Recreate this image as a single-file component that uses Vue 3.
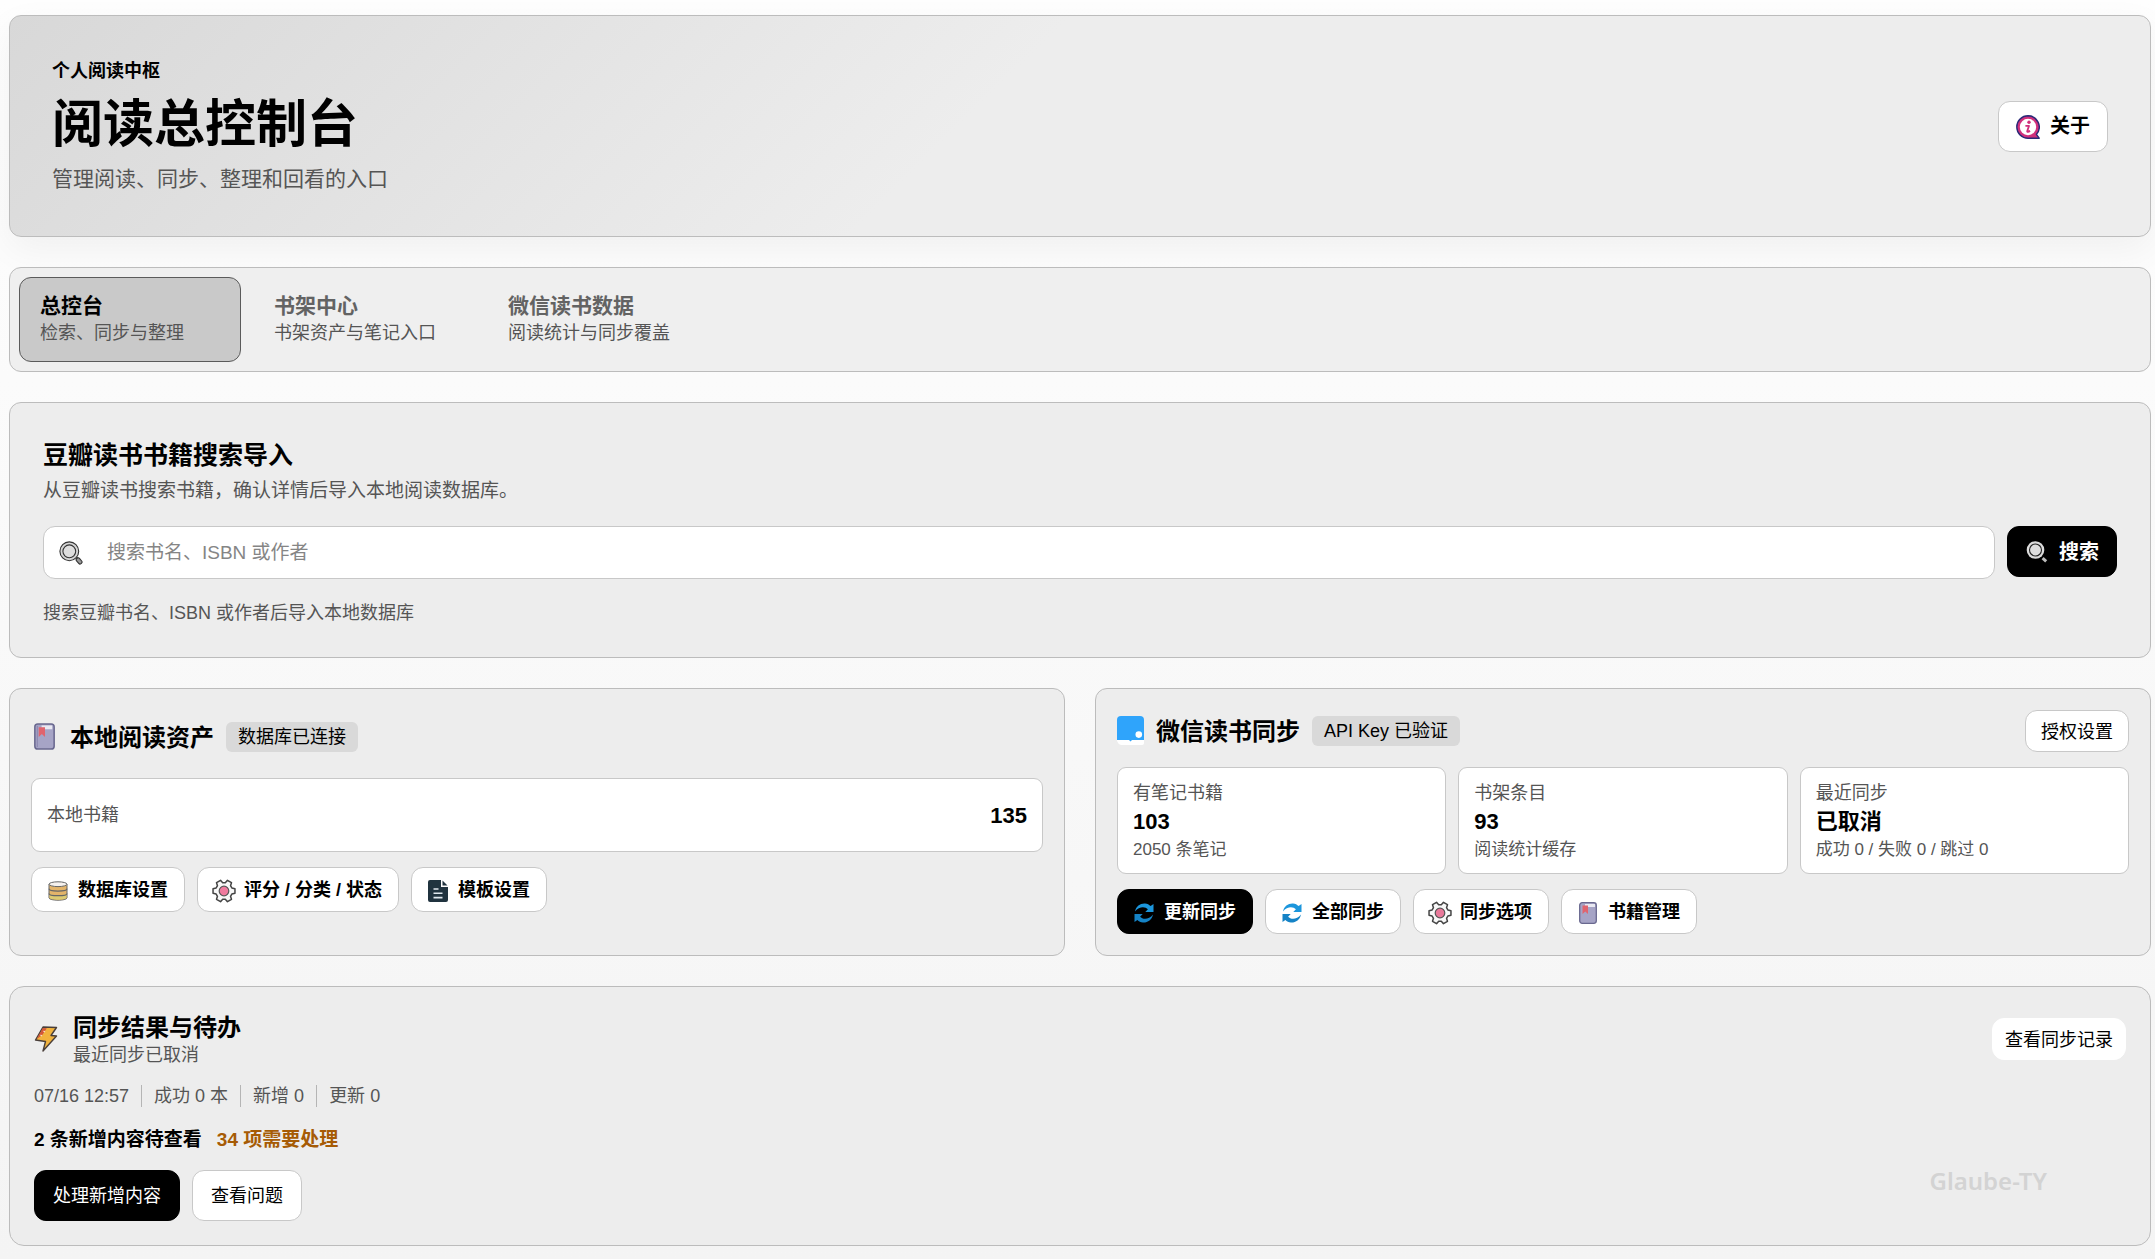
<template>
  <div class="dashboard">
    <!-- Hero -->
    <header class="panel hero">
      <div>
        <p class="hero-eyebrow">个人阅读中枢</p>
        <h1 class="hero-title">阅读总控制台</h1>
        <p class="hero-desc">管理阅读、同步、整理和回看的入口</p>
      </div>
      <button type="button" class="btn btn-large">
        <svg class="icon-24" viewBox="0 0 24 24" aria-hidden="true">
          <path d="M12 0.8a11.2 11.2 0 1 0 0 22.4h11.2l-2.8-3.8A11.2 11.2 0 0 0 12 0.8z" fill="#d0307c" stroke="#2b2a78" stroke-width="1.4" stroke-linejoin="round" />
          <circle cx="12" cy="12" r="8.2" fill="#fff" />
          <circle cx="13" cy="7.2" r="1.7" fill="#d0307c" />
          <path d="M9.4 10.9h3.6l-1.8 5.4q0 1.200 2.900-0.400" fill="none" stroke="#d0307c" stroke-width="1.800" stroke-linejoin="round" />
        </svg>
        关于
      </button>
    </header>

    <!-- Tabs -->
    <nav class="panel tabs">
      <button
        v-for="tab in tabs"
        :key="tab.id"
        type="button"
        :class="['tab', { active: activeTab === tab.id }]"
        @click="activeTab = tab.id"
      >
        <strong class="tab-title">{{ tab.title }}</strong>
        <span class="tab-desc">{{ tab.desc }}</span>
      </button>
    </nav>

    <!-- Book search -->
    <section class="panel search-panel">
      <h2 class="search-title">豆瓣读书书籍搜索导入</h2>
      <p class="search-desc">从豆瓣读书搜索书籍，确认详情后导入本地阅读数据库。</p>
      <form class="search-row" @submit.prevent>
        <label class="search-box">
          <svg class="icon-24" viewBox="0 0 24 24" aria-hidden="true">
            <path d="M17.5 16.5l1.6 1.5" stroke="#333" stroke-width="2" />
            <circle cx="10.3" cy="10.3" r="9.4" fill="#d6d6d6" stroke="#333" stroke-width="1.1" />
            <circle cx="10.3" cy="10.3" r="6.4" fill="#dedede" stroke="#333" stroke-width="1.1" />
            <rect x="16.8" y="18" width="6.6" height="3.8" rx="1.6" transform="rotate(50 20.1 19.9)" fill="#999" stroke="#333" stroke-width="1.1" />
          </svg>
          <input v-model="keyword" type="text" class="search-input" aria-label="搜索书名、ISBN 或作者" placeholder="搜索书名、ISBN 或作者" />
        </label>
        <button type="submit" class="btn btn-large btn-dark">
          <svg class="icon-24" viewBox="0 0 24 24" aria-hidden="true">
            <circle cx="10.5" cy="10" r="8.8" fill="#dcdcdc" />
            <circle cx="10.5" cy="10" r="6" fill="#dedede" stroke="#222" stroke-width="1.1" />
            <path d="M17.6 18.2l3.6 3.2" stroke="#bdbdbd" stroke-width="3" />
          </svg>
          搜索
        </button>
      </form>
      <p class="search-hint">搜索豆瓣书名、ISBN 或作者后导入本地数据库</p>
    </section>

    <div class="columns">
      <!-- Local library -->
      <section class="panel card">
        <div class="card-head card-head-tall">
          <svg class="icon-book" viewBox="0 0 22 28" aria-hidden="true">
            <rect x="1" y="1" width="20" height="26" rx="3" fill="#a6a4c6" stroke="#69688f" stroke-width="1.6" />
            <path d="M8 2.500h11v4H8z" fill="#e9e9f2" />
            <path d="M3.500 3v22" stroke="#8583ab" stroke-width="1" />
            <path d="M5 4.500h6.500v10l-3.250-3-3.250 3z" fill="#e0646e" />
          </svg>
          <h2 class="card-title">本地阅读资产</h2>
          <span class="badge">数据库已连接</span>
        </div>
        <div class="count-box">
          <span>本地书籍</span>
          <strong>135</strong>
        </div>
        <div class="actions">
          <button type="button" class="btn">
            <svg class="icon-20" viewBox="0 0 20 20" aria-hidden="true">
              <path d="M1 3.2v13.6c0 3.2 18 3.2 18 0V3.2z" fill="#e3b46a" stroke="#666" />
              <path d="M1.5 12.5c2 2.4 15 2.4 17 0v4.3c-1 2.6-16 2.6-17 0z" fill="#dccb72" />
              <ellipse cx="10" cy="3.2" rx="9" ry="2.4" fill="#f5f1ee" stroke="#666" />
              <path d="M1 7.8c0 3 18 3 18 0M1 12.4c0 3 18 3 18 0" fill="none" stroke="#666" stroke-width="1.2" />
            </svg>
            数据库设置
          </button>
          <button type="button" class="btn">
            <svg class="icon-gear" viewBox="0 0 24 24" aria-hidden="true">
              <path :d="gearPath" fill="#f8f8f8" stroke="#444" stroke-width="1.5" stroke-linejoin="round" />
              <circle cx="12" cy="12" r="4.8" fill="#f07a9e" stroke="#555" stroke-width="1.2" />
            </svg>
            评分 / 分类 / 状态
          </button>
          <button type="button" class="btn">
            <svg class="icon-20" viewBox="0 0 20 22" aria-hidden="true">
              <path d="M2 0h11v7h7v13a2 2 0 0 1-2 2H2a2 2 0 0 1-2-2V2a2 2 0 0 1 2-2z" fill="#20333f" />
              <path d="M14.5 0.5L19.5 5.5h-5z" fill="#20333f" />
              <path d="M5.5 9h5M5.5 13.3h9M5.5 17.6h9" stroke="#dfe8ee" stroke-width="1.6" />
            </svg>
            模板设置
          </button>
        </div>
      </section>

      <!-- WeRead sync -->
      <section class="panel card">
        <div class="card-head">
          <svg class="icon-weread" viewBox="0 0 27 30" aria-hidden="true">
            <path d="M0 23h27v4a2 2 0 0 1-2 2H4q-3-1-4-4z" fill="#fff" />
            <path d="M4 0h19a4 4 0 0 1 4 4v20H0V4a4 4 0 0 1 4-4z" fill="#2fa4fb" />
            <path d="M12 24h3l-1.5 1.5z" fill="#2fa4fb" />
            <circle cx="21.8" cy="18.6" r="3.3" fill="#fff" />
          </svg>
          <h2 class="card-title">微信读书同步</h2>
          <span class="badge">API Key 已验证</span>
          <button type="button" class="btn btn-plain head-action">授权设置</button>
        </div>
        <div class="stats">
          <div v-for="stat in stats" :key="stat.label" class="stat">
            <span class="stat-label">{{ stat.label }}</span>
            <strong class="stat-value">{{ stat.value }}</strong>
            <span class="stat-note">{{ stat.note }}</span>
          </div>
        </div>
        <div class="actions">
          <button
            v-for="action in syncActions"
            :key="action.label"
            type="button"
            :class="['btn', { 'btn-dark': action.primary }]"
          >
            <svg v-if="action.icon === 'sync'" class="icon-20" viewBox="0 0 20 20" aria-hidden="true">
              <path d="M1 8.5C2 3 6.5 0.2 11 0.5c2.4 0.2 4.2 1.2 5.6 2.6L19.5 1v8h-8.2l2.6-2.7C11 3.2 5 3.5 1 8.5z" fill="#1c96dc" />
              <path d="M19 11.5C18 17 13.5 19.8 9 19.5c-2.4-0.2-4.2-1.2-5.6-2.6L0.5 19v-8h8.2l-2.6 2.7C9 16.8 15 16.5 19 11.5z" fill="#1583c6" />
            </svg>
            <svg v-else-if="action.icon === 'gear'" class="icon-gear" viewBox="0 0 24 24" aria-hidden="true">
              <path :d="gearPath" fill="#f8f8f8" stroke="#444" stroke-width="1.5" stroke-linejoin="round" />
              <circle cx="12" cy="12" r="4.8" fill="#e8799a" stroke="#555" stroke-width="1.2" />
            </svg>
            <svg v-else class="icon-20" viewBox="0 0 20 22" aria-hidden="true">
              <rect x="1.7" y="0.7" width="16.6" height="20.6" rx="2.5" fill="#a6a4c6" stroke="#69688f" stroke-width="1.3" />
              <path d="M7 2h10v3H7z" fill="#e9e9f2" />
              <path d="M4.5 3.5h5.5v8.5l-2.75-2.5-2.75 2.5z" fill="#e0646e" />
            </svg>
            {{ action.label }}
          </button>
        </div>
      </section>
    </div>

    <!-- Sync result -->
    <section class="panel result">
      <div class="result-head">
        <svg class="icon-bolt" viewBox="0 0 24 26" aria-hidden="true">
          <path d="M9 1L22.5 1.5 17 9.5l5.5 0.5-13.5 15 2.5-9.5-10-1.5z" fill="#f2b33d" stroke="#4a3f3a" stroke-width="1.4" stroke-linejoin="round" />
          <path d="M8.8 2l4 0.2-4.5 6.8-5.5 4z" fill="#d4573a" />
          <path d="M9.5 5l1.5 1M6.5 9l1.5 1" stroke="#f9dfc8" stroke-width="1.3" />
        </svg>
        <div>
          <h2 class="card-title">同步结果与待办</h2>
          <p class="result-desc">最近同步已取消</p>
        </div>
        <button type="button" class="btn btn-plain btn-borderless head-action">查看同步记录</button>
      </div>
      <div class="meta">
        <span v-for="item in meta" :key="item" class="meta-item">{{ item }}</span>
      </div>
      <div class="todo">
        <strong>2 条新增内容待查看</strong>
        <strong class="todo-warn">34 项需要处理</strong>
      </div>
      <div class="actions">
        <button type="button" class="btn btn-result btn-dark">处理新增内容</button>
        <button type="button" class="btn btn-result">查看问题</button>
      </div>
      <span class="watermark">Glaube-TY</span>
    </section>
  </div>
</template>

<script setup>
import { ref } from 'vue'

const activeTab = ref('console')
const keyword = ref('')

const tabs = [
  { id: 'console', title: '总控台', desc: '检索、同步与整理' },
  { id: 'shelf', title: '书架中心', desc: '书架资产与笔记入口' },
  { id: 'weread', title: '微信读书数据', desc: '阅读统计与同步覆盖' }
]

const stats = [
  { label: '有笔记书籍', value: '103', note: '2050 条笔记' },
  { label: '书架条目', value: '93', note: '阅读统计缓存' },
  { label: '最近同步', value: '已取消', note: '成功 0 / 失败 0 / 跳过 0' }
]

const syncActions = [
  { label: '更新同步', icon: 'sync', primary: true },
  { label: '全部同步', icon: 'sync' },
  { label: '同步选项', icon: 'gear' },
  { label: '书籍管理', icon: 'book' }
]

const meta = ['07/16 12:57', '成功 0 本', '新增 0', '更新 0']

// Gear outline with six teeth around (12, 12)
const gearPath = (() => {
  const points = []
  for (let i = 0; i < 6; i++) {
    const steps = [[-21, 8.4], [-12, 11.2], [12, 11.2], [21, 8.4]]
    for (const [offset, radius] of steps) {
      const angle = ((i * 60 + offset) * Math.PI) / 180
      points.push(`${(12 + radius * Math.cos(angle)).toFixed(2)} ${(12 + radius * Math.sin(angle)).toFixed(2)}`)
    }
  }
  return `M${points.join('L')}Z`
})()
</script>

<style>
body {
  margin: 0;
  background: #f5f5f5;
}
</style>

<style scoped>
.dashboard {
  box-sizing: border-box;
  min-height: 100vh;
  padding: 15px 4px 13px 9px;
  display: flex;
  flex-direction: column;
  gap: 30px;
  background: linear-gradient(180deg, #fefefe, #f4f4f4);
  color: #000;
  font-family: "Liberation Sans", "Noto Sans CJK SC", sans-serif;
  font-size: 18px;
  line-height: 27px;
}

h1,
h2,
p {
  margin: 0;
}

svg {
  flex: none;
}

.panel {
  box-sizing: border-box;
  background: #ededed;
  border: 1px solid #bcbcbc;
  border-radius: 12px;
}

.hero {
  padding: 42px;
  display: flex;
  align-items: center;
  justify-content: space-between;
  background: linear-gradient(135deg, #d8d8d8, #ededed 45%);
  box-shadow: 0 12px 36px rgba(0, 0, 0, 0.05);
}

.hero-eyebrow {
  font-weight: 700;
}

.hero-title {
  margin: 12px 0 10px;
  font-size: 51px;
  line-height: 56px;
}

.hero-desc {
  font-size: 21px;
  line-height: 31px;
  color: #555;
}

.tabs {
  padding: 9px;
  display: flex;
  gap: 12px;
  background: #efefef;
}

.tab {
  box-sizing: border-box;
  width: 222px;
  padding: 14px 20px;
  display: flex;
  flex-direction: column;
  border: 1px solid transparent;
  border-radius: 12px;
  background: transparent;
  font: inherit;
  text-align: left;
  color: #636363;
  cursor: pointer;
}

.tab.active {
  background: #c9c9c9;
  border-color: #5a5a5a;
}

.tab-title {
  font-size: 21px;
  line-height: 28px;
}

.tab.active .tab-title {
  color: #000;
}

.tab-desc {
  color: #555;
}

.search-panel {
  padding: 33px 33px 30px;
}

.search-title {
  font-size: 25px;
  line-height: 38px;
}

.search-desc {
  margin-top: 2px;
  font-size: 19px;
  line-height: 30px;
  color: #555;
}

.search-row {
  margin: 20px 0 21px;
  display: flex;
  align-items: flex-start;
  gap: 12px;
}

.search-box {
  box-sizing: border-box;
  flex: 1;
  height: 53px;
  padding: 0 15px;
  display: flex;
  align-items: center;
  gap: 24px;
  background: #fff;
  border: 1px solid #c8c8c8;
  border-radius: 12px;
}

.search-input {
  flex: 1;
  min-width: 0;
  padding: 0;
  border: none;
  outline: none;
  background: transparent;
  font: inherit;
  font-size: 19px;
}

.search-input::placeholder {
  color: #858585;
}

.search-hint {
  color: #555;
}

.btn {
  box-sizing: border-box;
  height: 45px;
  padding: 2px 16px 0;
  display: inline-flex;
  align-items: center;
  justify-content: center;
  gap: 10px;
  background: #fff;
  border: 1px solid #c8c8c8;
  border-radius: 12px;
  color: #000;
  font: inherit;
  font-weight: 700;
  white-space: nowrap;
  cursor: pointer;
}

.btn-large {
  height: 51px;
  padding: 1px 17px 0;
  font-size: 20px;
}

.btn-plain {
  height: 42px;
  padding: 2px 15px 0;
  font-weight: 400;
}

.btn-result {
  height: 51px;
  padding: 2px 18px 0;
  font-weight: 400;
}

.btn-borderless {
  padding: 2px 12px 0;
  border-color: #fff;
}

.btn-dark {
  background: #000;
  border-color: #000;
  color: #fff;
}

.columns {
  display: grid;
  grid-template-columns: 1fr 1fr;
  gap: 30px;
}

.card {
  padding: 21px;
  display: flex;
  flex-direction: column;
  gap: 15px;
}

.card-head {
  min-height: 42px;
  display: flex;
  align-items: center;
  gap: 12px;
}

.card-head-tall {
  min-height: 53px;
}

.card-title {
  padding-top: 2px;
  font-size: 24px;
  line-height: 30px;
}

.head-action {
  margin-left: auto;
}

.badge {
  padding: 2px 12px;
  line-height: 26px;
  background: #d9d9d9;
  border-radius: 6px;
}

.count-box {
  box-sizing: border-box;
  height: 74px;
  padding: 0 15px;
  display: flex;
  align-items: center;
  justify-content: space-between;
  background: #fff;
  border: 1px solid #c8c8c8;
  border-radius: 9px;
  color: #555;
}

.count-box strong {
  font-size: 22px;
  color: #000;
}

.actions {
  display: flex;
  gap: 12px;
}

.stats {
  display: grid;
  grid-template-columns: repeat(3, 1fr);
  gap: 12px;
}

.stat {
  padding: 12px 15px 11px;
  display: flex;
  flex-direction: column;
  background: #fff;
  border: 1px solid #c8c8c8;
  border-radius: 9px;
  color: #555;
}

.stat-label {
  line-height: 26px;
}

.stat-value {
  font-size: 22px;
  line-height: 32px;
  color: #000;
}

.stat-note {
  font-size: 17px;
  line-height: 24px;
}

.result {
  position: relative;
  padding: 24px;
  border-radius: 15px;
}

.result-head {
  display: flex;
  align-items: center;
  gap: 15px;
}

.result-desc {
  line-height: 24px;
  color: #555;
}

.meta {
  margin-top: 18px;
  display: flex;
  line-height: 22px;
  color: #555;
}

.meta-item + .meta-item {
  margin-left: 12px;
  padding-left: 12px;
  border-left: 1px solid #b5b5b5;
}

.todo {
  margin: 18px 0 15px;
  display: flex;
  gap: 15px;
  font-size: 19px;
  line-height: 30px;
}

.todo-warn {
  color: #a65b05;
}

.watermark {
  position: absolute;
  right: 103px;
  bottom: 48px;
  font-family: "Noto Sans", sans-serif;
  font-size: 24px;
  font-weight: 600;
  line-height: 32px;
  color: #d3d3d3;
}

.icon-20 {
  width: 20px;
  height: 22px;
}

.icon-24 {
  width: 24px;
  height: 24px;
}

.icon-gear {
  width: 24px;
  height: 24px;
  margin: 0 -2px;
}

.icon-book {
  width: 27px;
  height: 27px;
}

.icon-weread {
  width: 27px;
  height: 30px;
}

.icon-bolt {
  width: 24px;
  height: 26px;
}
</style>
